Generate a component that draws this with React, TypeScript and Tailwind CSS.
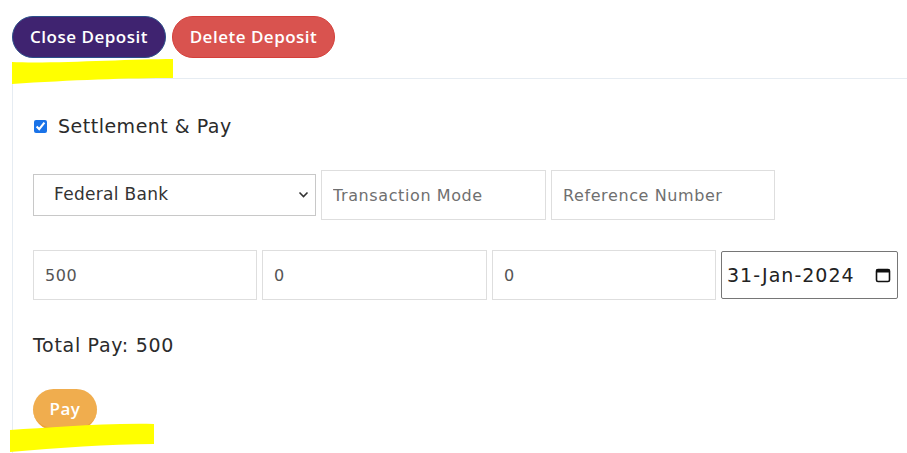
import React from "react";

const font = { fontFamily: '"DejaVu Sans", "Open Sans", sans-serif' };
const btnFont = { fontFamily: '"Open Sans", "DejaVu Sans", sans-serif' };

const Field = ({ value, placeholder, w }: { value?: string; placeholder?: string; w: string }) => (
  <input
    readOnly
    defaultValue={value}
    placeholder={placeholder}
    className={`${w} h-[50px] border border-[#dedede] px-[11px] text-[16px] tracking-[0.6px] text-[#555] placeholder:text-[#6f6f6f] outline-none`}
  />
);

const App = () => {
  return (
    <div className="h-[453px] w-[907px] bg-white overflow-hidden relative" style={font}>
      <div className="flex gap-[6px] pl-[12px] pt-[16px]" style={btnFont}>
        <button className="w-[154px] h-[42px] rounded-full bg-[#3f2370] border border-[#2b4f8a] text-white text-[17px] tracking-[0.5px] font-semibold">
          Close Deposit
        </button>
        <button className="w-[163px] h-[42px] rounded-full bg-[#d9534f] border border-[#d43f3a] text-white text-[17px] tracking-[0.5px] font-semibold">
          Delete Deposit
        </button>
      </div>

      {/* yellow annotation under Close Deposit */}
      <svg className="absolute left-[10px] top-[58px]" width="165" height="28" viewBox="0 0 165 28">
        <path d="M2 4 C40 6 120 1 163 1 L163 20 C120 20 60 22 2 26 Z" fill="#ffff00" />
      </svg>

      <div className="ml-[12px] mt-[20px] border-l border-t border-[#e6ecf2] pl-[20px] pb-[40px]">
        <label className="flex items-center gap-[11px] mt-[34px] h-[26px] text-[19px] tracking-[0.5px] text-[#2b2b2b]">
          <input type="checkbox" defaultChecked className="ml-[1px] w-[13px] h-[13px] accent-[#1a73e8]" />
          Settlement &amp; Pay
        </label>

        <div className="flex items-center gap-[5px] mt-[31px] h-[50px]">
          <div className="relative w-[283px] h-[42px] border border-[#c8c8c8] flex items-center px-[20px] text-[17px] tracking-[0.3px] text-[#333]">
            Federal Bank
            <svg className="absolute right-[6px] top-[16px]" width="11" height="8" viewBox="0 0 11 8">
              <path d="M1.5 1.5 L5.5 5.5 L9.5 1.5" stroke="#333" strokeWidth="1.6" fill="none" />
            </svg>
          </div>
          <Field placeholder="Transaction Mode" w="w-[225px]" />
          <Field placeholder="Reference Number" w="w-[224px]" />
        </div>

        <div className="flex items-center gap-[5px] mt-[30px] h-[50px]">
          <Field value="500" w="w-[224px]" />
          <Field value="0" w="w-[225px]" />
          <Field value="0" w="w-[224px]" />
          <div className="w-[177px] h-[48px] border border-[#767676] rounded-[2px] flex items-center justify-between pl-[5px] pr-[6px] text-[19px] tracking-[1px] text-[#222]">
            <span>31-Jan-2024</span>
            <svg width="16" height="16" viewBox="0 0 16 16">
              <rect x="1.5" y="2.5" width="13" height="12" rx="1.5" stroke="#111" strokeWidth="1.6" fill="none" />
              <rect x="1.5" y="2.5" width="13" height="3" fill="#111" />
            </svg>
          </div>
        </div>

        <div className="mt-[32px] h-[26px] flex items-center text-[19px] tracking-[0.7px] text-[#2b2b2b]">Total Pay: 500</div>

        <button
          className="mt-[31px] w-[64px] h-[41px] rounded-full bg-[#f0ad4e] border-b-2 border-[#eea236] text-white text-[17px] tracking-[0.5px] font-semibold"
          style={btnFont}
        >
          Pay
        </button>
      </div>

      {/* yellow annotation under Pay */}
      <svg className="absolute left-[8px] top-[420px]" width="148" height="33" viewBox="0 0 148 33">
        <path d="M2 10 C40 8 90 3 146 4 L146 24 C100 24 50 28 2 32 Z" fill="#ffff00" />
      </svg>
    </div>
  );
};

export default App;
